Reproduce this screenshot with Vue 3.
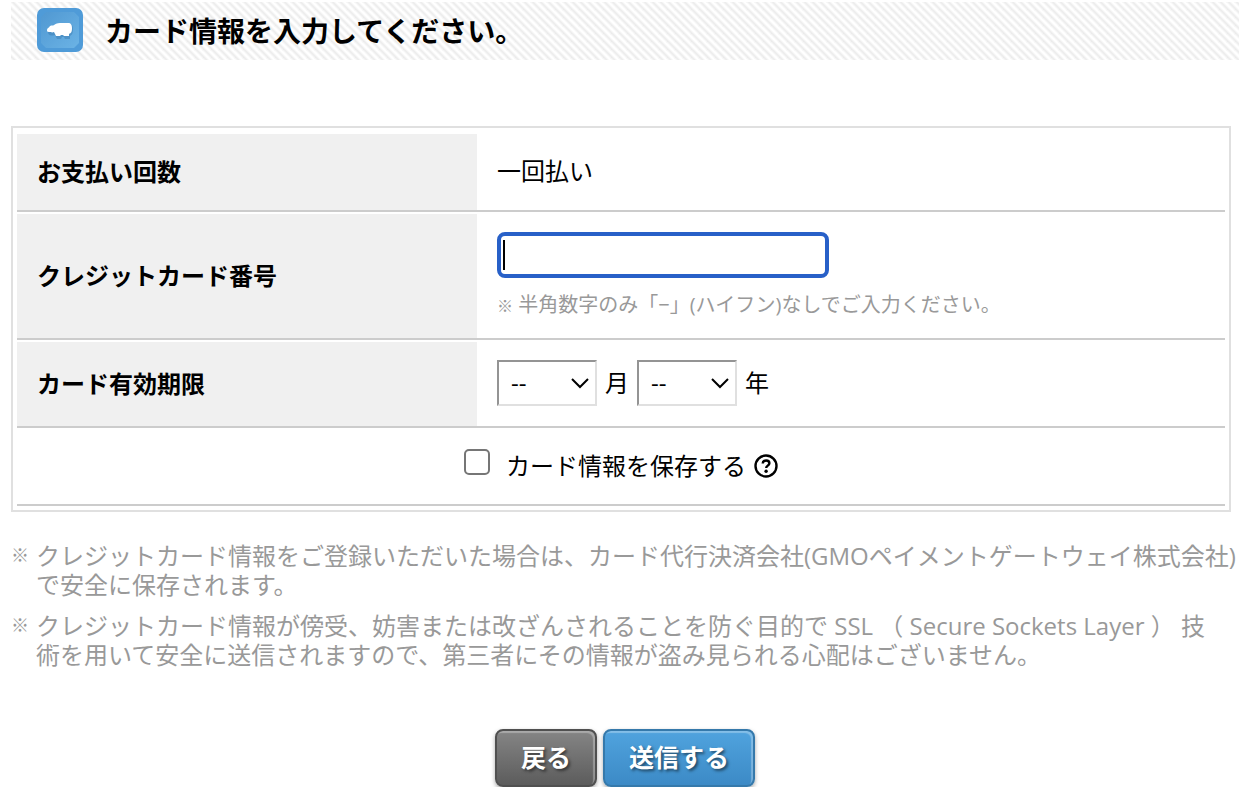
<script setup>
import { ref } from 'vue'

const cardNumber = ref('')
const month = ref('')
const year = ref('')
const save = ref(false)
const months = Array.from({ length: 12 }, (_, i) => String(i + 1).padStart(2, '0'))
const years = Array.from({ length: 10 }, (_, i) => String(25 + i))
</script>

<template>
  <main class="page">
    <header class="title-bar">
      <svg class="logo" viewBox="0 0 46 46" aria-hidden="true">
        <defs>
          <linearGradient id="logo-fill" x1="0" y1="0" x2="1" y2="1">
            <stop offset="0" stop-color="#5098d2" />
            <stop offset="1" stop-color="#6bb3e5" />
          </linearGradient>
        </defs>
        <rect width="46" height="44" rx="7" fill="#4f9bd8" />
        <path d="M9 4h28l5 5v26l-5 5H9l-5-5V9z" fill="url(#logo-fill)" />
        <path
          d="M11 23l3-3c3 0 4-4 8-4h10c3 0 4 2 4 5 0 4-1 6-3 7v3h-5l-1-2h-2l-1 2h-4l-2-4c-4 1-7 1-7-4z"
          fill="#3878ad"
          opacity=".45"
        />
        <path
          d="M10 22c0-2 2-2 3-4 2-1 3 0 4-1 3-2 5-2 8-2h6c3 0 4 2 4 5 0 4-1 5-3 6v2h-5l-1-1h-2l-1 1h-4l-2-4c-2 1-3 0-5 0-2 0-2-1-2-2z"
          fill="#fff"
        />
      </svg>
      <h1>カード情報を入力してください。</h1>
    </header>

    <form @submit.prevent>
      <div class="frame">
        <table>
          <tbody>
            <tr class="row-times">
              <th scope="row">お支払い回数</th>
              <td>一回払い</td>
            </tr>
            <tr class="row-number">
              <th scope="row"><label for="card-number">クレジットカード番号</label></th>
              <td>
                <div class="number-field">
                  <input id="card-number" v-model="cardNumber" type="text" inputmode="numeric" />
                  <span class="caret"></span>
                </div>
                <p class="hint"><span class="mark">※</span> 半角数字のみ「−」(ハイフン)なしでご入力ください。</p>
              </td>
            </tr>
            <tr class="row-expiry">
              <th scope="row">カード有効期限</th>
              <td>
                <div class="expiry">
                  <span class="select">
                    <select id="month" v-model="month">
                      <option value="">--</option>
                      <option v-for="m in months" :key="m">{{ m }}</option>
                    </select>
                    <svg viewBox="0 0 18 12" aria-hidden="true"><path d="M1 2l8 8 8-8" /></svg>
                  </span>
                  <label for="month">月</label>
                  <span class="select">
                    <select id="year" v-model="year">
                      <option value="">--</option>
                      <option v-for="y in years" :key="y">{{ y }}</option>
                    </select>
                    <svg viewBox="0 0 18 12" aria-hidden="true"><path d="M1 2l8 8 8-8" /></svg>
                  </span>
                  <label for="year">年</label>
                </div>
              </td>
            </tr>
            <tr class="row-save">
              <td colspan="2">
                <div class="save">
                  <input id="save" v-model="save" type="checkbox" />
                  <label for="save">カード情報を保存する</label>
                  <svg class="help" viewBox="0 0 24 24" aria-hidden="true">
                    <circle cx="12" cy="12" r="10.5" />
                    <path d="M8.7 9.6c0-2 1.5-3.1 3.4-3.1s3.3 1.1 3.3 2.8c0 2.3-3.2 2.3-3.2 4.6" />
                    <circle class="dot" cx="12.1" cy="17.2" r="1.7" />
                  </svg>
                </div>
              </td>
            </tr>
          </tbody>
        </table>
      </div>

      <ul class="notes">
        <li>
          <span class="mark">※</span>
          <p>クレジットカード情報をご登録いただいた場合は、カード代行決済会社(GMOペイメントゲートウェイ株式会社)で安全に保存されます。</p>
        </li>
        <li>
          <span class="mark">※</span>
          <p>クレジットカード情報が傍受、妨害または改ざんされることを防ぐ目的で SSL （ Secure Sockets Layer ） 技<br />術を用いて安全に送信されますので、第三者にその情報が盗み見られる心配はございません。</p>
        </li>
      </ul>

      <div class="actions">
        <button type="button" class="back">戻る</button>
        <button type="submit" class="send">送信する</button>
      </div>
    </form>
  </main>
</template>

<style>
body {
  background: #fff;
}
</style>

<style scoped>
.page {
  font-family: "Open Sans", "Noto Sans CJK JP", sans-serif;
  font-size: 24px;
  line-height: 30px;
  color: #000;
  padding: 2px 9px 0 11px;
}
.title-bar {
  display: flex;
  align-items: center;
  gap: 22px;
  height: 58px;
  padding-left: 26px;
  background: linear-gradient(45deg, #ebebeb 10%, #fff 30%, #fff 40%, #ebebeb 60%, #fff 80%, #fff 90%, #ebebeb) 0 0 / 8px 8px;
}
.logo {
  width: 46px;
  height: 46px;
}
h1 {
  margin: 0;
  font-size: 28px;
  line-height: 40px;
  font-weight: 700;
}
.frame {
  margin: 66px 8px 0 0;
  padding: 4px 4px 2px;
  border: 2px solid #e0e0e0;
}
table {
  width: 100%;
  table-layout: fixed;
  border-collapse: separate;
  border-spacing: 0 2px;
}
th,
td {
  box-sizing: border-box;
  padding: 0 20px;
  border-bottom: 2px solid #ccc;
  text-align: left;
  vertical-align: middle;
}
td {
  padding-bottom: 2px;
}
th {
  width: 460px;
  background: #f0f0f0;
  font-weight: 700;
}
.row-times { height: 78px; }
.row-number { height: 126px; }
.row-number td { padding-bottom: 0; }
.row-expiry { height: 86px; }
.row-save { height: 76px; }
.number-field {
  position: relative;
  width: 332px;
}
.number-field input {
  display: block;
  box-sizing: border-box;
  width: 100%;
  height: 46px;
  padding: 0 4px;
  border: 4px solid #2860c8;
  border-radius: 8px;
  outline: none;
  background: #fff;
  font: inherit;
  caret-color: transparent;
}
.caret {
  position: absolute;
  left: 6px;
  top: 8px;
  width: 2px;
  height: 30px;
  background: #000;
}
.hint {
  margin: 12px 0 0;
  font-size: 20px;
  line-height: 30px;
  color: #999;
}
.mark {
  font-weight: 500;
}
.hint .mark {
  font-size: 16px;
}
.expiry {
  display: flex;
  align-items: center;
  gap: 8px;
}
.select {
  position: relative;
  width: 100px;
}
.select select {
  display: block;
  box-sizing: border-box;
  width: 100%;
  height: 46px;
  padding: 0 12px;
  appearance: none;
  border: 2px solid;
  border-color: #949494 #e0e0e0 #e0e0e0 #949494;
  border-radius: 0;
  background: #fff;
  color: #000;
  font: inherit;
}
.select svg {
  position: absolute;
  right: 8px;
  top: 17px;
  width: 18px;
  height: 12px;
  fill: none;
  stroke: #000;
  stroke-width: 2;
  pointer-events: none;
}
.save {
  display: flex;
  align-items: center;
  justify-content: center;
}
.save input {
  box-sizing: border-box;
  width: 26px;
  height: 26px;
  margin: 0 16px 8px 0;
  appearance: none;
  border: 2px solid #767676;
  border-radius: 5px;
  background: #fff;
}
.save input:checked {
  background: #2860c8;
}
.help {
  width: 24px;
  height: 24px;
  margin-left: 8px;
  fill: none;
  stroke: #000;
  stroke-width: 2.4;
}
.help .dot {
  fill: #000;
  stroke: none;
}
.notes {
  display: grid;
  gap: 12px;
  margin: 29px 0 0;
  padding: 0;
  list-style: none;
  color: #999;
  line-height: 29px;
}
.notes li {
  display: flex;
}
.notes .mark {
  flex: 0 0 25px;
  font-size: 18px;
}
.notes p {
  flex: 1;
  margin: 0;
}
.actions {
  display: flex;
  justify-content: center;
  gap: 6px;
  margin-top: 60px;
}
button {
  height: 58px;
  padding: 0 24px 2px;
  border: 2px solid;
  border-radius: 8px;
  color: #fff;
  font: inherit;
  font-size: 25px;
  font-weight: 700;
  text-shadow: 2px 2px 3px rgba(0, 0, 0, 0.5);
}
.back {
  border-color: #505050;
  background: linear-gradient(#858585, #5c5c5c);
  box-shadow: inset -2px 2px 1px rgba(255, 255, 255, 0.3), 0 2px 4px rgba(0, 0, 0, 0.35);
}
.send {
  border-color: #3579ab;
  background: linear-gradient(#50a3de, #3c8ac6);
  box-shadow: inset -2px 2px 1px rgba(255, 255, 255, 0.3), 0 2px 4px rgba(0, 0, 0, 0.35);
}
</style>
